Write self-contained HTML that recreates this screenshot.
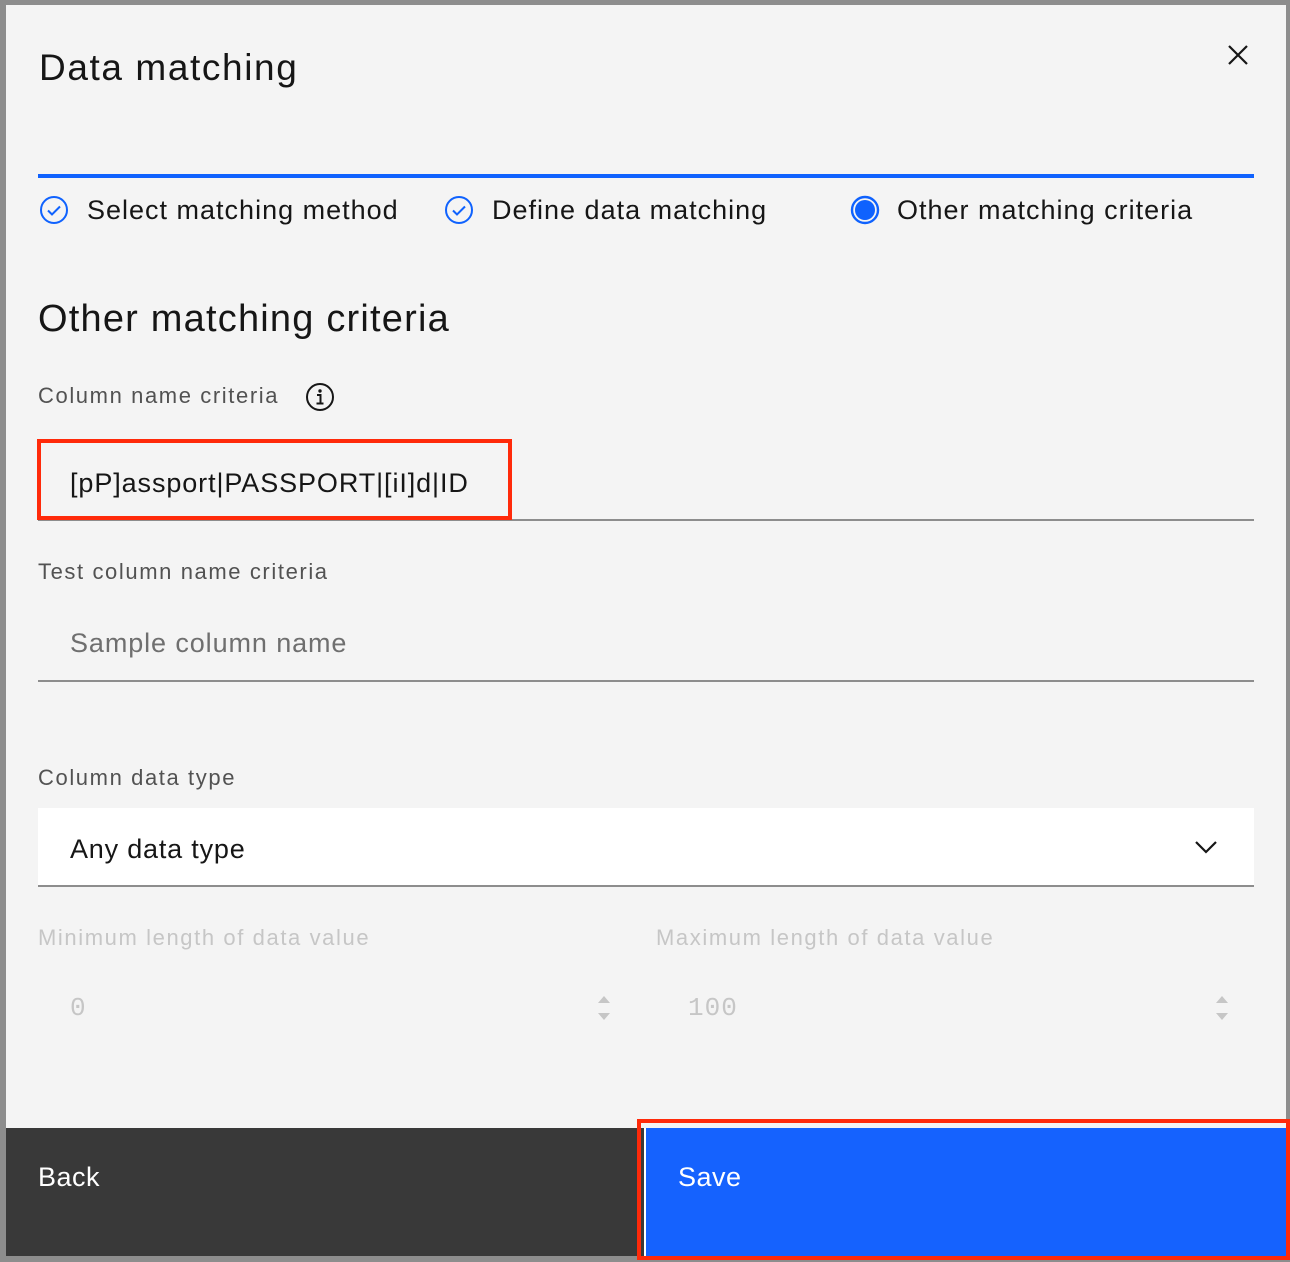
<!DOCTYPE html>
<html><head><style>
*{margin:0;padding:0;box-sizing:border-box}
body{width:1290px;height:1262px;background:#8d8d8d;font-family:"Liberation Sans",sans-serif;position:relative;overflow:hidden}
.m{position:absolute;left:6px;top:5px;width:1280px;height:1251px;background:#f4f4f4}
.a{position:absolute;white-space:nowrap}
.t{font-size:37px;color:#161616;letter-spacing:1.6px}
.s{font-size:27px;color:#161616;letter-spacing:1px}
.l{font-size:22px;color:#525252;letter-spacing:1.6px}
.d{font-size:22px;color:#c6c6c6;letter-spacing:1.6px}
.line{position:absolute;height:2px;background:#8d8d8d}
</style></head><body>
<div class="m"></div>
<div class="a t" style="left:39px;top:47px">Data matching</div>
<svg class="a" style="left:1226px;top:43px" width="24" height="24" viewBox="0 0 24 24"><path d="M3 3L21 21M21 3L3 21" stroke="#161616" stroke-width="2.2"/></svg>
<div class="a" style="left:38px;top:174px;width:1216px;height:4px;background:#0f62fe"></div>
<svg class="a" style="left:39px;top:195px" width="30" height="30" viewBox="0 0 30 30"><circle cx="15" cy="15" r="13" fill="none" stroke="#0f62fe" stroke-width="2"/><path d="M9 15.5l4 4 8-8" fill="none" stroke="#0f62fe" stroke-width="2"/></svg>
<div class="a s" style="left:87px;top:195px">Select matching method</div>
<svg class="a" style="left:444px;top:195px" width="30" height="30" viewBox="0 0 30 30"><circle cx="15" cy="15" r="13" fill="none" stroke="#0f62fe" stroke-width="2"/><path d="M9 15.5l4 4 8-8" fill="none" stroke="#0f62fe" stroke-width="2"/></svg>
<div class="a s" style="left:492px;top:195px">Define data matching</div>
<svg class="a" style="left:850px;top:195px" width="30" height="30" viewBox="0 0 30 30"><circle cx="15" cy="15" r="13" fill="none" stroke="#0f62fe" stroke-width="2.4"/><circle cx="15" cy="15" r="10" fill="#0f62fe"/></svg>
<div class="a s" style="left:897px;top:195px">Other matching criteria</div>
<div class="a" style="left:38px;top:298px;font-size:38px;color:#161616;letter-spacing:1.2px">Other matching criteria</div>
<div class="a l" style="left:38px;top:383px">Column name criteria</div>
<svg class="a" style="left:305px;top:382px" width="30" height="30" viewBox="0 0 30 30"><circle cx="15" cy="15" r="13" fill="none" stroke="#161616" stroke-width="2"/><circle cx="15" cy="9" r="1.7" fill="#161616"/><path d="M12 13h3.5v8M11.5 21.5h7" fill="none" stroke="#161616" stroke-width="2"/></svg>
<div class="line" style="left:38px;top:519px;width:1216px"></div>
<div class="a" style="left:37px;top:439px;width:475px;height:81px;border:4px solid #ff2a0a"></div>
<div class="a s" style="left:70px;top:468px;letter-spacing:.9px">[pP]assport|PASSPORT|[iI]d|ID</div>
<div class="a l" style="left:38px;top:559px">Test column name criteria</div>
<div class="a s" style="left:70px;top:628px;color:#6f6f6f;letter-spacing:.9px">Sample column name</div>
<div class="line" style="left:38px;top:680px;width:1216px"></div>
<div class="a l" style="left:38px;top:765px">Column data type</div>
<div class="a" style="left:38px;top:808px;width:1216px;height:79px;background:#fff;border-bottom:2px solid #8d8d8d"></div>
<div class="a s" style="left:70px;top:834px;letter-spacing:.8px">Any data type</div>
<svg class="a" style="left:1194px;top:838px" width="24" height="18" viewBox="0 0 24 18"><path d="M2 4l10 10 10-10" fill="none" stroke="#161616" stroke-width="2.2"/></svg>
<div class="a d" style="left:38px;top:925px">Minimum length of data value</div>
<div class="a d" style="left:656px;top:925px">Maximum length of data value</div>
<div class="a" style="left:70px;top:993px;font-family:'Liberation Mono',monospace;font-size:26px;color:#c6c6c6">0</div>
<div class="a" style="left:688px;top:993px;font-family:'Liberation Mono',monospace;font-size:26px;color:#c6c6c6;letter-spacing:1px">100</div>
<svg class="a" style="left:595px;top:993px" width="18" height="30" viewBox="0 0 18 30"><path d="M3 10l6-7 6 7zM3 20l6 7 6-7z" fill="#c6c6c6"/></svg>
<svg class="a" style="left:1213px;top:993px" width="18" height="30" viewBox="0 0 18 30"><path d="M3 10l6-7 6 7zM3 20l6 7 6-7z" fill="#c6c6c6"/></svg>
<div class="a" style="left:6px;top:1128px;width:640px;height:128px;background:#393939"></div>
<div class="a" style="left:38px;top:1162px;font-size:27px;color:#fff;letter-spacing:.5px">Back</div>
<div class="a" style="left:644px;top:1128px;width:642px;height:128px;background:#1562fe;border-left:2px solid #fff"></div>
<div class="a" style="left:678px;top:1162px;font-size:27px;color:#fff;letter-spacing:.5px">Save</div>
<div class="a" style="left:637px;top:1119px;width:653px;height:141px;border:4px solid #ff2a0a"></div>
</body></html>
